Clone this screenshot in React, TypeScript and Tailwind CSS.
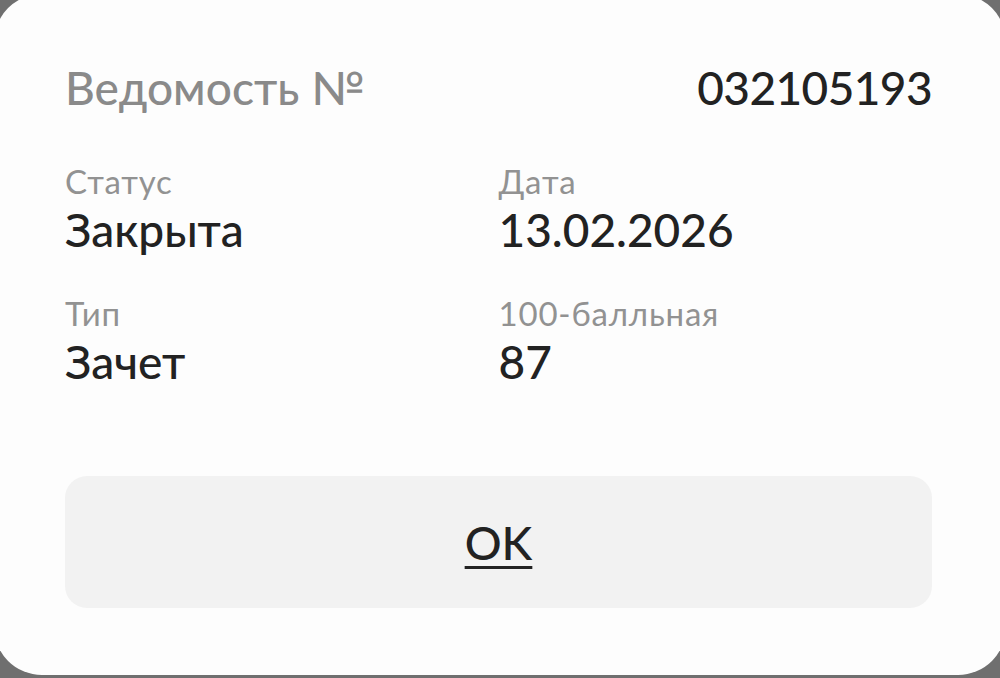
import React from 'react'

const font = { fontFamily: 'Lato, "Noto Sans", sans-serif' }

function Field({ label, value }: { label: string; value: string }) {
  return (
    <div className="flex flex-col">
      <span className="text-[33px] leading-[38px] tracking-[0.8px] text-[#929292]">{label}</span>
      <span className="mt-[5px] text-[46px] leading-[50px] font-medium text-[#222222]">{value}</span>
    </div>
  )
}

export default function App() {
  return (
    <div className="h-[678px] w-[1000px] overflow-hidden bg-[#6f6f6f]" style={font}>
      <div className="-mx-[6px] -mt-[6px] h-[681px] rounded-[48px] bg-[#fdfdfd] pl-[71px] pr-[74px] pt-[70px]">
        <div className="flex items-center justify-between">
          <span className="text-[46px] leading-[48px] font-medium text-[#8a8a8a]">Ведомость №</span>
          <span className="text-[46px] leading-[48px] tracking-[-0.6px] font-medium text-[#222222]">032105193</span>
        </div>
        <div className="mt-[50px] grid grid-cols-2 gap-y-[39px]">
          <Field label="Статус" value="Закрыта" />
          <Field label="Дата" value="13.02.2026" />
          <Field label="Тип" value="Зачет" />
          <Field label="100-балльная" value="87" />
        </div>
        <button className="mt-[89px] flex h-[132px] w-full items-center justify-center rounded-[22px] bg-[#f2f2f2]">
          <span className="text-[46px] font-medium text-[#222222] underline decoration-[3px] underline-offset-[6px]">OK</span>
        </button>
      </div>
    </div>
  )
}
